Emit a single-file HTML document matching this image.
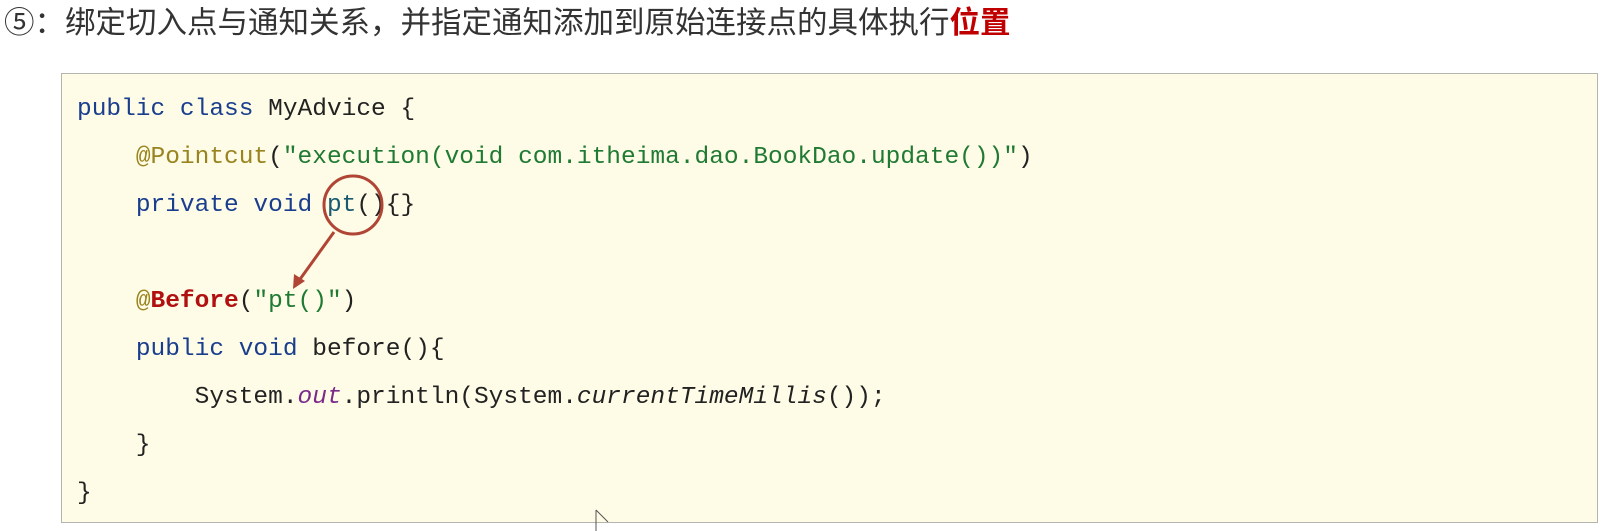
<!DOCTYPE html>
<html><head><meta charset="utf-8"><style>
html,body{margin:0;padding:0;background:#fff;width:1603px;height:531px;overflow:hidden;position:relative}
.title{position:absolute;left:4px;top:3px;font-family:"Liberation Sans","Noto Sans CJK SC",sans-serif;font-size:30.5px;color:#333;white-space:nowrap;line-height:40px}
.title b{color:#c00000}
.box{position:absolute;left:61px;top:73px;width:1537px;height:450px;background:#fefce6;border:1px solid #b5b5b0;box-sizing:border-box}
pre{margin:0;position:absolute;left:15px;top:12px;font-family:"Liberation Mono","DejaVu Sans Mono",monospace;font-size:24.5px;line-height:48px;color:#222}
.k{color:#1a3e8e}.a{color:#9a8420}.s{color:#1f7a34}.r{color:#b01010;font-weight:bold}.p{color:#7a2a8a;font-style:italic}.i{font-style:italic}
svg{position:absolute;left:0;top:0}
</style></head><body>
<div class="title">⑤：绑定切入点与通知关系，并指定通知添加到原始连接点的具体执行<b>位置</b></div>
<div class="box"><pre><span class="k">public class</span> MyAdvice {
    <span class="a">@Pointcut</span>(<span class="s">"execution(void com.itheima.dao.BookDao.update())"</span>)
    <span class="k">private void</span> <span class="k" style="color:#1a5a70">pt</span>(){}

    <span class="a">@</span><span class="r">Before</span>(<span class="s">"pt()"</span>)
    <span class="k">public void</span> before(){
        System.<span class="p">out</span>.println(System.<span class="i">currentTimeMillis</span>());
    }
}</pre></div>
<svg width="1603" height="531">
<circle cx="353" cy="205" r="29" fill="none" stroke="#b04535" stroke-width="3"/>
<line x1="334" y1="232" x2="298" y2="282" stroke="#b04535" stroke-width="3"/>
<polygon points="293,289 294,274 305,281" fill="#b04535"/>
<path d="M596 510 L596 531 M596 510 L608 522" stroke="#555" stroke-width="1" fill="none"/>
</svg>
</body></html>
